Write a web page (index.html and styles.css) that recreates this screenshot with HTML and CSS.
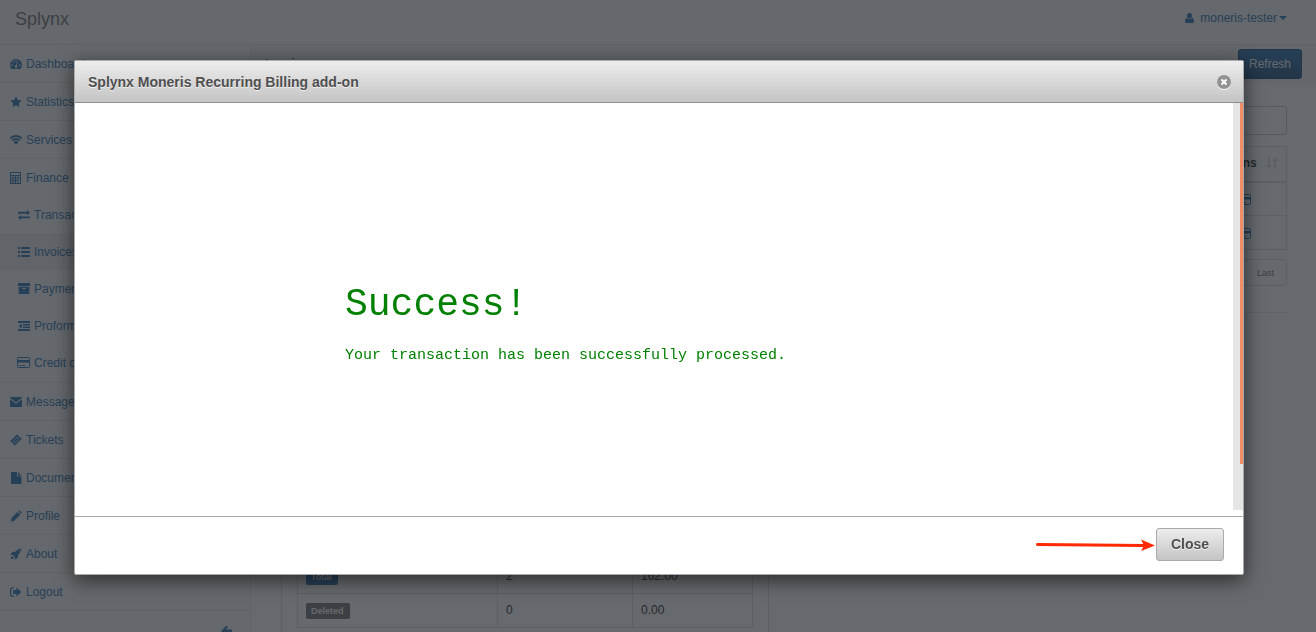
FILE: index.html
```html
<!DOCTYPE html>
<html lang="en">
<head>
<meta charset="utf-8">
<title>Splynx</title>
<link rel="stylesheet" href="styles.css">
</head>
<body>
<svg class="defs" aria-hidden="true">
  <symbol id="card" viewBox="0 0 13 12"><path fill="none" stroke="currentColor" d="M1.500 .5h10q1 0 1 1v8q0 1-1 1h-10q-1 0-1-1v-8q0-1 1-1z"/><path d="M0 3h13v2.500H0zM2 8h2v1H2zm3 0h3v1H5z"/></symbol>
</svg>
<div class="page">
  <header class="topbar">
    <a class="brand" href="#">Splynx</a>
    <a class="user" href="#">
      <svg class="user-icon" viewBox="0 0 9 10"><ellipse cx="4.500" cy="2.600" rx="2.500" ry="2.600"/><path d="M2 4.800Q4.500 7 7 4.800 9 5.200 9 8.500 9 10 7.500 10h-6Q0 10 0 8.500 0 5.200 2 4.800z"/></svg>
      <span>moneris-tester</span><i class="caret"></i>
    </a>
  </header>
  <div class="columns">
    <nav class="sidebar">
      <ul class="menu">
        <li><a href="#"><svg class="icon" viewBox="0 0 12 12"><path fill-rule="evenodd" d="M1.500 11Q0 9.200 0 7a6 6 0 0 1 12 0q0 2.200-1.500 4zM5.300 2.200v1.500h1.400V2.200zM2.500 3.400v1.400h1.400V3.400zM1.300 6.500v1.400h1.400V6.500zM9.300 6.500v1.400h1.400V6.500zM7.300 3.800L5.900 7.200Q4.500 7.700 4.700 9q.4 1.100 1.500 1 1.200-.3 1.200-1.400 0-.7-.6-1.100l1.300-3.400z"/></svg>Dashboard</a></li>
        <li><a href="#"><svg class="icon" viewBox="0 0 12 12"><path d="M6 .3l1.700 3.600 3.900.5-2.800 2.800.7 3.900L6 9.200l-3.500 1.900.7-3.900L.4 4.400l3.900-.5z"/></svg>Statistics</a></li>
        <li><a href="#"><svg class="icon" viewBox="0 0 12 12"><path fill="none" stroke="currentColor" stroke-width="1.700" d="M.2 4.300q5.800-4.600 11.600 0M2.200 6.500q3.800-3 7.600 0M4.100 8.500q1.900-1.400 3.800 0"/><path d="M4.500 9.100q1.500-.8 3 0L6 11z"/></svg>Services</a></li>
        <li class="open"><a href="#"><svg class="icon" viewBox="0 0 12 12"><path fill-rule="evenodd" d="M0 0h11v12H0zM1 1v2h9V1zM1 4v1.700h1.500V4zM3.500 4v1.700H5V4zM6 4v1.700h1.500V4zM8.500 4v1.700H10V4zM1 6.600v1.700h1.500V6.600zM3.500 6.600v1.700H5V6.600zM6 6.600v1.700h1.500V6.600zM1 9.300V11h1.500V9.300zM3.500 9.300V11H5V9.300zM6 9.300V11h1.500V9.300zM8.500 6.600V11H10V6.600z"/></svg>Finance</a>
          <ul class="submenu">
            <li><a href="#"><svg class="icon" viewBox="0 0 12 12"><path d="M0 2.800h9V1l3 2.700L9 6.200V4.700H0zM12 7.500H3V6L0 8.500 3 11V9.300h9z"/></svg>Transactions</a></li>
            <li class="active"><a href="#"><svg class="icon" viewBox="0 0 12 12"><path d="M0 1h2v2H0zm3 0h9v2H3zM0 5h2v2H0zm3 0h9v2H3zM0 9h2v2H0zm3 0h9v2H3z"/></svg>Invoices</a></li>
            <li><a href="#"><svg class="icon" viewBox="0 0 12 12"><path fill-rule="evenodd" d="M0 0h12v3H0zM.700 3.700h10.600V11H.700zM4.500 5v1.200h3V5z"/></svg>Payments</a></li>
            <li><a href="#"><svg class="icon" viewBox="0 0 12 12"><path d="M0 1h12v2H0zm5 3h7v1.500H5zm0 2.500h7V8H5zM0 9h12v2H0zM3.800 3.600v4.800L.500 6z"/></svg>Proforma invoices</a></li>
            <li><a href="#"><svg class="icon card"><use href="#card"/></svg>Credit cards</a></li>
          </ul>
        </li>
        <li><a href="#"><svg class="icon" viewBox="0 0 12 12"><path d="M0 1.800Q0 1 1 1h10q1 0 1 .8L6 6.500zM0 3.300l6 4.500 6-4.500V10q0 1-1 1H1q-1 0-1-1z"/></svg>Messages</a></li>
        <li><a href="#"><svg class="icon" viewBox="0 0 12 12"><path fill-rule="evenodd" d="M0 7.300L7.200.5l1.300 1.200q0 1.400 1.500 1.500l2 1.200L4.800 11.500 3.300 10.200Q3.600 8.700 2 8.500zM2.700 7.200l2.200 2.100 4.700-4.500-2.200-2.100zM3.500 7.200l3.900-3.700 1.400 1.300L4.900 8.500z"/></svg>Tickets</a></li>
        <li><a href="#"><svg class="icon" viewBox="0 0 12 12"><path d="M1 0h6v4.300h4.500V12H1zM8 0l3.500 3.500H8z"/></svg>Documents</a></li>
        <li><a href="#"><svg class="icon" viewBox="0 0 12 12"><path d="M7.400 2l2.800 2.800L4 11 .8 11.500l.5-3.300zM8.200 1.300l.6-.6q.5-.4 1 0l1.600 1.600q.4.500 0 1l-.6.600z"/></svg>Profile</a></li>
        <li><a href="#"><svg class="icon" viewBox="0 0 12 12"><path fill-rule="evenodd" d="M11.500.600Q8 .500 5.400 3.800L2.400 4 .300 7.100l2.400-.3 2.400 2.400-.5 2.500 3.400-2.200.2-3Q11.500 4 11.500.600zM9.500 2a.7.700 0 1 0 .1 0zM2.500 8Q1 8 .700 11.100 3.800 11 4 9.500z"/></svg>About</a></li>
        <li><a href="#"><svg class="icon" viewBox="0 0 12 12"><path d="M4 1.500v1H2q-.7 0-.7.700v5.600q0 .7.700.7h2v1.200H2Q0 10.700 0 8.700V3.300Q0 1.500 2 1.500zM6.500 1.500L11.300 6l-4.800 4.500V8H3.200V4h3.300z"/></svg>Logout</a></li>
      </ul>
      <button class="collapse" aria-label="Collapse menu"><svg class="icon" viewBox="0 0 12 12"><path d="M0 6L5.500.5 7 2 4.600 4.500H11v3H4.600L7 10l-1.500 1.500z"/></svg></button>
    </nav>
    <main class="main">
      <div class="titlebar"><span class="page-title">Invoices</span><button class="refresh">Refresh</button></div>
      <div class="content">
        <input class="search" type="text" aria-label="Search">
        <table class="grid invoices">
          <thead><tr><th>Actions <svg class="sort" viewBox="0 0 12 12"><path d="M2 0h2v8h2L3 12 0 8h2zM8 12h2V4h2L9 0 6 4h2z"/></svg></th></tr></thead>
          <tbody>
            <tr><td><svg class="icon card"><use href="#card"/></svg></td></tr>
            <tr><td><svg class="icon card"><use href="#card"/></svg></td></tr>
          </tbody>
        </table>
        <div class="pager"><button>Last</button></div>
        <hr>
        <section class="totals">
          <table class="grid">
            <colgroup><col class="kind"><col class="count"><col class="sum"></colgroup>
            <tbody>
              <tr><td><span class="tag">Total</span></td><td>2</td><td>162.00</td></tr>
              <tr><td><span class="tag gray">Deleted</span></td><td>0</td><td>0.00</td></tr>
            </tbody>
          </table>
        </section>
      </div>
    </main>
  </div>
</div>
<div class="overlay">
  <div class="dialog" role="dialog" aria-modal="true" aria-labelledby="dialog-title">
    <div class="dialog-head">
      <h2 id="dialog-title">Splynx Moneris Recurring Billing add-on</h2>
      <button class="dismiss" aria-label="Close dialog"><svg viewBox="0 0 16 16"><circle cx="8" cy="9" r="7" fill="#f8f8f8"/><circle cx="8" cy="8" r="7" fill="#929292"/><path d="M5.500 5.500l5 5m0-5l-5 5" stroke="#fff" stroke-width="2"/></svg></button>
    </div>
    <div class="dialog-body">
      <div class="message">
        <h1>Success!</h1>
        <p>Your transaction has been successfully processed.</p>
      </div>
      <div class="scroll"><div class="thumb"></div></div>
    </div>
    <div class="dialog-foot">
      <svg class="arrow" viewBox="0 0 120 14"><path d="M1.500 6.500L108 7.500" stroke="#ff2a00" stroke-width="3" stroke-linecap="round"/><path d="M105 1.500L119 7.500 105 13l3-5.500z" fill="#ff2a00"/></svg>
      <button class="close">Close</button>
    </div>
  </div>
</div>
</body>
</html>
```
FILE: styles.css
```css
* { box-sizing: border-box; }
body {
  margin: 0;
  font: 12px/18px "Liberation Sans", Arial, sans-serif;
  color: #333;
  background: #fff;
}
button, input { font: inherit; }
a { color: #337ab7; text-decoration: none; }
ul { list-style: none; margin: 0; padding: 0; }
svg { fill: currentColor; display: block; }
.defs { position: absolute; width: 0; height: 0; }
.page { display: flex; flex-direction: column; height: 100vh; overflow: hidden; }
.topbar {
  flex: none;
  height: 45px;
  display: flex;
  justify-content: space-between;
  padding: 0 29px 0 15px;
  border-bottom: 1px solid #e7e7e7;
  background: #fcfcfc;
}
.brand { color: #777; font-size: 18px; line-height: 38px; }
.user { display: flex; align-items: center; height: 36px; }
.user-icon { width: 9px; height: 10px; margin-right: 6px; }
.caret { border: 4px solid transparent; border-top-color: currentColor; border-bottom: 0; margin-left: 2px; }
.columns { flex: 1; display: flex; min-height: 0; }
.sidebar { flex: none; width: 251px; border-right: 1px solid #e7e7e7; background: #fcfcfc; }
.menu > li { border-bottom: 1px solid #e7e7e7; }
.menu a { display: flex; align-items: center; height: 37px; padding-left: 10px; gap: 4px; }
.menu .submenu a { padding-left: 18px; }
.submenu { padding-bottom: 1px; }
.submenu .active { background: #eee; }
.icon { width: 12px; height: 12px; flex: none; }
.submenu .card { margin-left: -1px; width: 13px; }
.collapse { display: block; margin: 14px 17px 0 auto; padding: 0; border: 0; background: none; color: #337ab7; }
.main { flex: 1; min-width: 0; background: #fff; }
.titlebar { display: flex; justify-content: space-between; height: 39px; padding: 4px 14px; background: #f5f5f5; }
.page-title { font-size: 14px; line-height: 30px; }
.refresh {
  height: 30px;
  padding: 0 10px;
  color: #fff;
  background: linear-gradient(#337ab7, #265a88);
  border: 1px solid #245580;
  border-radius: 3px;
}
.content { padding: 22px 29px 0 30px; }
.search { display: block; margin: 0 0 11px auto; width: 180px; height: 29px; border: 1px solid #ccc; border-radius: 3px; }
.grid { width: 100%; border-collapse: collapse; table-layout: fixed; }
.grid td, .grid th { border: 1px solid #ddd; padding: 7px 8px 8px; height: 34px; }
.invoices .sort { color: #ddd; }
.grid.invoices th { height: 35px; text-align: right; border-bottom-width: 2px; }
.grid.invoices td { color: #337ab7; padding: 9px 35px 7px 8px; }
.invoices td .icon { width: 13px; margin-left: auto; }
.sort { display: inline-block; width: 12px; height: 12px; margin: 0 0 -2px 6px; }
.pager { display: flex; justify-content: flex-end; margin-top: 9px; }
.pager button { height: 27px; padding: 0 12px 0 21px; font-size: 9px; color: #777; background: none; border: 1px solid #ddd; border-radius: 3px; }
hr { border: 0; border-top: 1px solid #e7e7e7; margin: 26px 0 0; }
.totals { width: 488px; margin-top: 149px; padding: 96px 15px 15px; border: 1px solid #ddd; }
.kind { width: 200px; }
.count { width: 135px; }
.tag { display: inline-block; padding: 0 6px 0 5px; font: bold 9px/16px "Liberation Sans", Arial, sans-serif; color: #fff; background: #337ab7; border-radius: 2px; vertical-align: middle; }
.gray { background: #777; }
.overlay {
  position: fixed;
  inset: 0;
  padding: 60px 72px 57px 74px;
  background: rgba(33, 38, 44, .69);
}
.dialog {
  display: flex;
  flex-direction: column;
  height: 100%;
  background: #fff;
  border: 1px solid #aaa;
  border-radius: 2px;
  box-shadow: 0 5px 20px rgba(0, 0, 0, .6);
  color: #4f4f4f;
}
.dialog-head {
  flex: none;
  display: flex;
  align-items: center;
  justify-content: space-between;
  height: 42px;
  padding: 0 11px 0 13px;
  border-bottom: 1px solid #8f8f8f;
  background: linear-gradient(#ededed, #c4c4c4);
}
.dialog h2 { margin: 0; font-size: 14px; text-shadow: 0 1px 0 rgba(255, 255, 255, .7); }
.dismiss { padding: 0; border: 0; background: none; }
.dismiss svg { width: 16px; height: 16px; }
.dialog-body { flex: 1; display: flex; justify-content: space-between; padding-bottom: 6px; }
.message { padding: 178px 0 0 270px; font-family: "Courier New", "Liberation Mono", monospace; color: #008000; }
.message h1 { margin: 0; font-size: 38px; font-weight: normal; line-height: 48px; }
.message p { margin: 17px 0 0; font-size: 15px; line-height: 20px; }
.scroll { width: 10px; background: #e5e5e5; }
.thumb { width: 3px; height: 361px; margin-left: auto; background: #f18d66; }
.dialog-foot {
  flex: none;
  display: flex;
  align-items: center;
  justify-content: flex-end;
  height: 58px;
  padding: 0 19px 2px;
  border-top: 1px solid #aaa;
}
.arrow { width: 120px; height: 14px; }
.close {
  height: 33px;
  padding: 0 14px 2px;
  font-size: 14px;
  font-weight: bold;
  color: #4f4f4f;
  text-shadow: 0 1px 0 rgba(255, 255, 255, .7);
  background: linear-gradient(#ededed, #c4c4c4);
  border: 1px solid #aaa;
  border-radius: 3px;
}
```
